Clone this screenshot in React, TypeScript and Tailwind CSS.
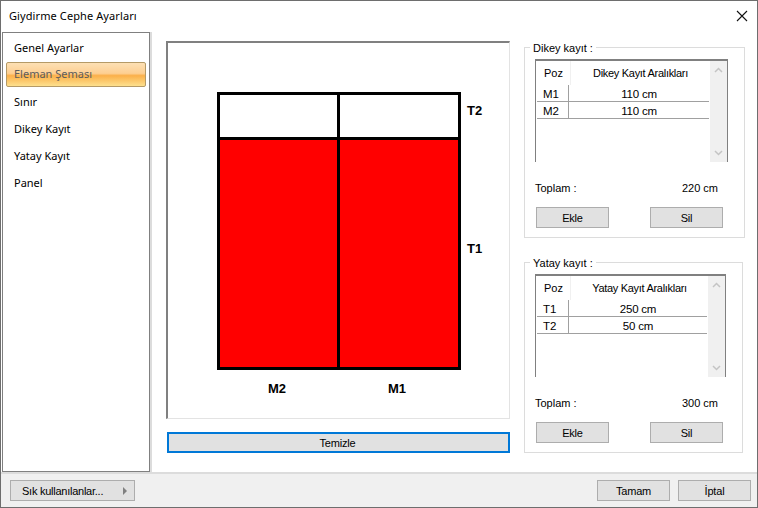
import React from 'react';

const menuItems = ['Genel Ayarlar', 'Eleman Şeması', 'Sınır', 'Dikey Kayıt', 'Yatay Kayıt', 'Panel'];

function PlainButton({ label, className }: { label: string; className: string }) {
  return (
    <button className={`h-[21px] bg-[#e1e1e1] border border-[#adadad] pt-[1px] text-[11px] leading-none tracking-[-0.2px] text-black ${className}`}>
      {label}
    </button>
  );
}

interface KayitProps {
  title: string;
  header: string;
  rows: [string, string][];
  total: string;
  className: string;
  gridWidth: string;
  rowWidth: string;
}

function KayitGroup({ title, header, rows, total, className, gridWidth, rowWidth }: KayitProps) {
  return (
    <div className={`relative h-[191px] border border-[#dcdcdc] pt-[11px] pl-[10px] ${className}`}>
      <span className="absolute left-[5px] -top-[7px] bg-white px-[3px] text-[11px] leading-[15px]">{title}</span>

      {/* Grid */}
      <div className={`flex h-[103px] border-t-2 border-x border-[#808080] ${gridWidth}`}>
        <div className="flex-1 min-w-0 pl-[1px]">
          <div className="flex h-[24px] items-center text-[11px]">
            <span className="w-[34px] text-center border-r border-[#f0f0f0] h-full leading-[24px]">Poz</span>
            <span className="flex-1 text-center tracking-[-0.3px]">{header}</span>
          </div>
          <div className={rowWidth}>
            {rows.map(([poz, value]) => (
              <div key={poz} className="flex h-[17px] border-b border-[#a0a0a0] text-[11.5px] leading-[18px]">
                <span className="w-[32px] pl-[6px] border-r border-[#a0a0a0]">{poz}</span>
                <span className="flex-1 text-center tracking-[-0.2px]">{value}</span>
              </div>
            ))}
          </div>
        </div>
        <div className="flex w-[17px] flex-col items-center justify-between bg-[#f0f0f0] py-[6px] shrink-0">
          <svg width="9" height="6" viewBox="0 0 9 6" fill="none" stroke="#c4c4c4" strokeWidth="1.5"><path d="M1 5 4.5 1.5 8 5" /></svg>
          <svg width="9" height="6" viewBox="0 0 9 6" fill="none" stroke="#c4c4c4" strokeWidth="1.5"><path d="M1 1 4.5 4.5 8 1" /></svg>
        </div>
      </div>

      {/* Total */}
      <div className="mt-[19px] flex w-[183px] justify-between text-[11px] leading-[15px]">
        <span>Toplam :</span>
        <span>{total}</span>
      </div>

      {/* Actions */}
      <div className="mt-[11px] flex gap-[41px] pl-[1px]">
        <PlainButton label="Ekle" className="w-[73px]" />
        <PlainButton label="Sil" className="w-[73px]" />
      </div>
    </div>
  );
}

function Diagram() {
  return (
    <div className="relative h-[278px] w-[244px] ml-[49px] mt-[49px] border-[3px] border-black bg-[#ff0000]">
      <div className="flex h-full flex-col">
        <div className="flex h-[45px] border-b-[3px] border-black bg-white">
          <div className="w-[117px]" />
          <div className="w-[3px] bg-black" />
          <div className="flex-1" />
        </div>
        <div className="flex flex-1">
          <div className="w-[117px]" />
          <div className="w-[3px] bg-black" />
          <div className="flex-1" />
        </div>
      </div>
      <span className="absolute left-[247px] top-[8px] text-[13px] font-bold leading-[16px] text-black">T2</span>
      <span className="absolute left-[247px] top-[146px] text-[13px] font-bold leading-[16px] text-black">T1</span>
      <span className="absolute left-[48px] top-[286px] text-[13px] font-bold leading-[16px] text-black">M2</span>
      <span className="absolute left-[168px] top-[286px] text-[13px] font-bold leading-[16px] text-black">M1</span>
    </div>
  );
}

export default function App() {
  return (
    <div
      className="flex h-[508px] w-[758px] flex-col overflow-hidden border border-[#6e6e6e] bg-white text-black"
      style={{ fontFamily: '"Liberation Sans", Arial, sans-serif' }}
    >
      {/* Title bar */}
      <div className="flex h-[31px] shrink-0 items-center justify-between pb-[1px] pl-[8px] pr-[9px]">
        <span className="text-[11px] tracking-[0.1px]" style={{ fontFamily: '"Noto Sans", sans-serif' }}>
          Giydirme Cephe Ayarları
        </span>
        <svg width="12" height="12" viewBox="0 0 12 12" stroke="#111" strokeWidth="1.1" fill="none">
          <path d="M1 1 11 11M11 1 1 11" />
        </svg>
      </div>

      {/* Body */}
      <div className="flex min-h-0 flex-1">
        {/* Left list */}
        <div className="ml-[1px] w-[148px] shrink-0 border border-[#808080] pt-[2px]" style={{ fontFamily: '"Noto Sans", sans-serif' }}>
          {menuItems.map((item) =>
            item === 'Eleman Şeması' ? (
              <div
                key={item}
                className="mx-[3px] mb-[2px] flex h-[25px] items-center rounded-[2px] border border-[#b59a66] bg-[linear-gradient(#fde0b4_0%,#fdcf92_45%,#fbb04a_55%,#fde08e_100%)] pl-[7px] text-[11px] text-[#5c5c5c]"
              >
                {item}
              </div>
            ) : (
              <div key={item} className="flex h-[27px] items-center pl-[11px] text-[11px]">
                {item}
              </div>
            ),
          )}
        </div>

        {/* Main panel */}
        <div className="flex min-w-0 flex-1 border-l-2 border-[#dcdcdc]">
          {/* Drawing */}
          <div className="ml-[14px] mt-[9px] w-[344px] shrink-0">
            <div className="h-[378px] border-t-2 border-l-2 border-[#808080] border-r border-b border-r-[#e3e3e3] border-b-[#e3e3e3]">
              <Diagram />
            </div>
            <button className="mt-[13px] ml-[1px] h-[21px] w-[343px] border-2 border-[#0078d7] bg-[#e1e1e1] pt-[1px] pr-[2px] text-[11px] leading-none tracking-[-0.2px]">
              Temizle
            </button>
          </div>

          {/* Right column */}
          <div className="ml-[14px] mt-[15px] flex w-[221px] flex-col gap-[24px]">
            <KayitGroup
              title="Dikey kayıt :"
              header="Dikey Kayıt Aralıkları"
              rows={[['M1', '110 cm'], ['M2', '110 cm']]}
              total="220 cm"
              className="w-[221px]"
              gridWidth="w-[193px]"
              rowWidth="w-[172px]"
            />
            <KayitGroup
              title="Yatay kayıt :"
              header="Yatay Kayıt Aralıkları"
              rows={[['T1', '250 cm'], ['T2', '50 cm']]}
              total="300 cm"
              className="w-[219px]"
              gridWidth="w-[191px]"
              rowWidth="w-[170px]"
            />
          </div>
        </div>
      </div>

      {/* Footer */}
      <div className="flex h-[35px] shrink-0 items-center justify-between border-t-2 border-[#dcdcdc] bg-[#f0f0f0] pl-[9px] pr-[6px]">
        <button className="flex h-[21px] w-[125px] items-center justify-between border border-[#adadad] bg-[#e1e1e1] pl-[11px] pr-[7px] pt-[1px] text-[11px] leading-none tracking-[-0.25px]">
          <span>Sık kullanılanlar...</span>
          <span className="h-0 w-0 border-y-[4px] border-l-[4px] border-y-transparent border-l-[#808080]" />
        </button>
        <div className="flex gap-[8px]">
          <PlainButton label="Tamam" className="w-[73px]" />
          <PlainButton label="İptal" className="w-[73px]" />
        </div>
      </div>
    </div>
  );
}
